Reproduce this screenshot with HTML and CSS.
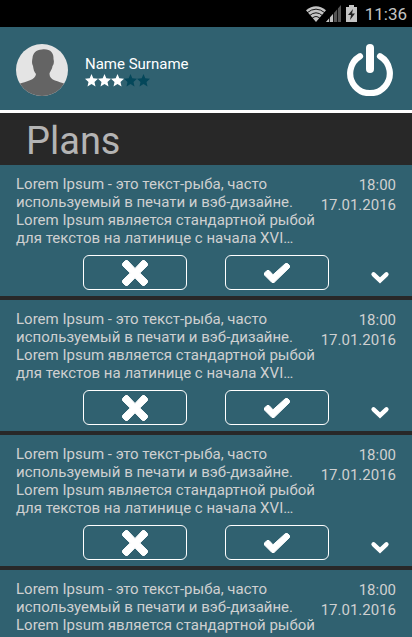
FILE: index.html
```
<!DOCTYPE html>
<html lang="ru">
<head>
<meta charset="utf-8">
<meta name="viewport" content="width=device-width, initial-scale=1">
<title>Plans</title>
<link rel="stylesheet" href="styles.css">
</head>
<body>
<svg class="defs" aria-hidden="true">
  <symbol id="star" viewBox="0 0 13 13"><path d="M6.500 0 8.300 4.300 13 4.700 9.500 7.900 10.500 12.500 6.500 10.100 2.500 12.500 3.500 7.900 0 4.700 4.700 4.300z"/></symbol>
  <symbol id="cross" viewBox="0 0 28 28"><path d="M4.500 1.500H6.500L14 9.500 21.500 1.500H23.500L26.500 4.500V6.500L18.800 14 26.500 21.500V23.500L23.500 26.500H21.500L14 18.800 6.500 26.500H4.500L1.500 23.500V21.500L9.200 14 1.500 6.500V4.500z" fill="currentColor" stroke="currentColor" stroke-linejoin="round"/></symbol>
  <symbol id="check" viewBox="0 0 28 22"><path d="M22.500 1.500H24.500L26.500 3.500V5.500L11 20.500H9L1.500 13V11L4 8.500H6L10 12.800z" fill="currentColor" stroke="currentColor" stroke-linejoin="round"/></symbol>
  <symbol id="chevron" viewBox="0 0 16 12"><path d="M2.500 2.800 8 8 13.500 2.800" fill="none" stroke="currentColor" stroke-width="3.800" stroke-linecap="round"/></symbol>
</svg>
<div class="status">
  <svg class="wifi" width="20" height="16" viewBox="0 0 20 16" fill="none" stroke="#000" stroke-width=".9"><path d="M0 4.200Q10-3.800 20 4.200L10 16z" fill="currentColor" stroke="none"/><path d="M1 6.800Q10-.5 19 6.800M3.500 9.600Q10 4 16.500 9.600M6 12.400Q10 8.600 14 12.400"/></svg>
  <svg class="signal" width="15" height="17" viewBox="0 0 15 17"><path d="M0 17 15 0V17z" fill="#555"/><path d="M0 17 7 9V17z" fill="currentColor"/><path d="M3.500 0V17M7.500 0V17M11.500 0V17" stroke="#000" stroke-width=".8"/></svg>
  <svg class="battery" width="11" height="17" viewBox="0 0 11 17"><path d="M3 0H8V2H11V17H0V2H3z" fill="currentColor"/><path d="M7 4 2 10H5L4 15 9 8.500H6z" fill="#222"/></svg>
  <span class="clock">11:36</span>
</div>
<header class="profile">
  <svg class="avatar" width="52" height="52" viewBox="0 0 52 52" role="img" aria-label="Avatar">
    <clipPath id="round"><circle cx="26" cy="26" r="26"/></clipPath>
    <g clip-path="url(#round)"><path d="M0 0H52V52H0z" fill="#e4e4e4"/><path d="M26 5.500C34 4.500 38 9 37.500 15 38.500 18 37.500 21 36.500 22 36 26 33.500 28 33.500 30 33.500 37 43 37 49 40V52H3V40C10 37.500 19.500 36 20 30 18 28 17.500 25 17 22 15.500 19 16 17 16.500 14 17 9 20 6 26 5.500z" fill="#646464"/></g>
  </svg>
  <div class="person">
    <span class="name">Name Surname</span>
    <span class="stars" role="img" aria-label="3 / 5"><svg><use href="#star"/></svg><svg><use href="#star"/></svg><svg><use href="#star"/></svg><svg class="off"><use href="#star"/></svg><svg class="off"><use href="#star"/></svg></span>
  </div>
  <button class="power" aria-label="Power"><svg width="46" height="52" viewBox="0 0 46 52" fill="none" stroke="currentColor" stroke-linecap="round"><path d="M13 12.300A19.800 19.800 0 1 0 33 12.300" stroke-width="6.200"/><path d="M23 4V25" stroke-width="8"/></svg></button>
</header>
<h1>Plans</h1>
<main>
  <article class="plan">
    <div class="info"><p>Lorem Ipsum - это текст-рыба, часто используемый в печати и вэб-дизайне. Lorem Ipsum является стандартной рыбой для текстов на латинице с начала XVI…</p><div class="when"><time>18:00</time><time>17.01.2016</time></div></div>
    <div class="actions"><button class="choice" aria-label="Reject"><svg class="cross"><use href="#cross"/></svg></button><button class="choice" aria-label="Accept"><svg class="check"><use href="#check"/></svg></button><button class="more" aria-label="More"><svg><use href="#chevron"/></svg></button></div>
  </article>
  <article class="plan">
    <div class="info"><p>Lorem Ipsum - это текст-рыба, часто используемый в печати и вэб-дизайне. Lorem Ipsum является стандартной рыбой для текстов на латинице с начала XVI…</p><div class="when"><time>18:00</time><time>17.01.2016</time></div></div>
    <div class="actions"><button class="choice" aria-label="Reject"><svg class="cross"><use href="#cross"/></svg></button><button class="choice" aria-label="Accept"><svg class="check"><use href="#check"/></svg></button><button class="more" aria-label="More"><svg><use href="#chevron"/></svg></button></div>
  </article>
  <article class="plan">
    <div class="info"><p>Lorem Ipsum - это текст-рыба, часто используемый в печати и вэб-дизайне. Lorem Ipsum является стандартной рыбой для текстов на латинице с начала XVI…</p><div class="when"><time>18:00</time><time>17.01.2016</time></div></div>
    <div class="actions"><button class="choice" aria-label="Reject"><svg class="cross"><use href="#cross"/></svg></button><button class="choice" aria-label="Accept"><svg class="check"><use href="#check"/></svg></button><button class="more" aria-label="More"><svg><use href="#chevron"/></svg></button></div>
  </article>
  <article class="plan">
    <div class="info"><p>Lorem Ipsum - это текст-рыба, часто используемый в печати и вэб-дизайне. Lorem Ipsum является стандартной рыбой для текстов на латинице с начала XVI…</p><div class="when"><time>18:00</time><time>17.01.2016</time></div></div>
    <div class="actions"><button class="choice" aria-label="Reject"><svg class="cross"><use href="#cross"/></svg></button><button class="choice" aria-label="Accept"><svg class="check"><use href="#check"/></svg></button><button class="more" aria-label="More"><svg><use href="#chevron"/></svg></button></div>
  </article>
</main>
</body>
</html>
```
FILE: styles.css
```
* { box-sizing: border-box; }
body {
  margin: 0;
  height: 100vh;
  display: flex;
  flex-direction: column;
  overflow: hidden;
  background: #282828;
  font-family: Roboto, "Noto Sans", sans-serif;
}
svg { display: block; flex: none; }
.defs { position: absolute; width: 0; height: 0; }
button { padding: 0; border: 0; background: none; color: #fff; cursor: pointer; }

.status {
  flex: none;
  height: 27px;
  padding-right: 5px;
  display: flex;
  justify-content: flex-end;
  align-items: center;
  background: #000;
  color: #c4c4c4;
}
.battery { margin-left: 5px; }
.clock { margin-left: 8px; padding-top: 1px; font-size: 17px; line-height: 26px; }

.profile {
  flex: none;
  height: 86px;
  padding: 2px 19px 0 16px;
  display: flex;
  align-items: center;
  background: #306170;
  border-bottom: 3px solid #fff;
  color: #fff;
}
.person { flex: 1; margin-left: 17px; padding-top: 2px; }
.name { display: block; font-size: 15px; line-height: 19px; }
.stars { display: flex; }
.stars svg { width: 13px; height: 13px; fill: #fff; }
.stars .off { fill: #04475a; }

h1 {
  flex: none;
  margin: 0;
  padding: 4px 0 0 26px;
  font-size: 38px;
  line-height: 48px;
  font-weight: 400;
  color: #b4b4b4;
}

main { flex: 1; min-height: 0; overflow: hidden; }
.plan {
  height: 131px;
  margin-bottom: 4px;
  padding: 10px 16px 0;
  background: #306170;
  color: #cfd0d0;
}
.info { display: flex; justify-content: space-between; }
.info p { flex: 0 1 304px; margin: 0; font-size: 15px; line-height: 18px; }
.when { flex: none; text-align: right; font-size: 15px; line-height: 20px; }
.when time { display: block; }

.actions { display: flex; align-items: center; margin-top: 8px; padding: 0 6px 0 67px; }
.choice {
  width: 104px;
  height: 35px;
  margin-right: 38px;
  display: grid;
  place-items: center;
  border: 1px solid #fff;
  border-radius: 6px;
}
.cross { width: 28px; height: 28px; }
.check { width: 28px; height: 22px; }
.more { margin: 10px 0 0 auto; }
.more svg { width: 20px; height: 14px; }
```
